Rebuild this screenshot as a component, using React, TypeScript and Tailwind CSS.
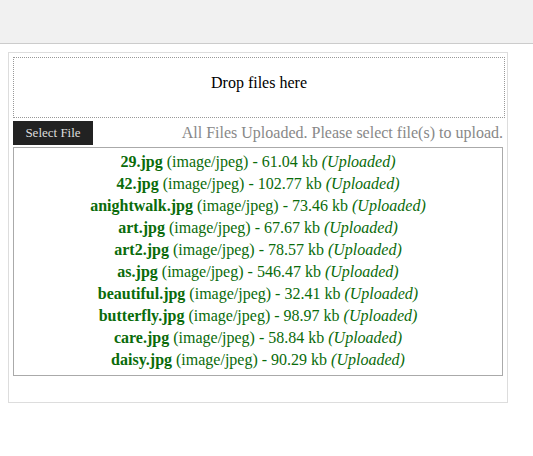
const files = [
  { name: "29.jpg", size: "61.04" },
  { name: "42.jpg", size: "102.77" },
  { name: "anightwalk.jpg", size: "73.46" },
  { name: "art.jpg", size: "67.67" },
  { name: "art2.jpg", size: "78.57" },
  { name: "as.jpg", size: "546.47" },
  { name: "beautiful.jpg", size: "32.41" },
  { name: "butterfly.jpg", size: "98.97" },
  { name: "care.jpg", size: "58.84" },
  { name: "daisy.jpg", size: "90.29" },
];

export default function App() {
  return (
    <div className="min-h-screen bg-white font-['Liberation_Serif','Times_New_Roman',serif] text-[16px]">
      <div className="h-[44px] bg-[#f1f1f1] border-b border-[#cccccc]" />

      <div className="ml-[8px] mt-[8px] w-[500px] border border-[#dddddd] pl-[4px] pt-[4px] pb-[26px]">
        <div className="w-[492px] h-[61px] border border-dotted border-[#999999] pt-[16px] text-center leading-[18px] text-black">
          Drop files here
        </div>

        <div className="mt-[3px] flex w-[490px] items-center justify-between">
          <button className="h-[24px] w-[80px] bg-[#222222] text-[13px] text-[#dddddd]">
            Select File
          </button>
          <span className="text-[#888888] leading-[18px]">
            All Files Uploaded. Please select file(s) to upload.
          </span>
        </div>

        <div className="mt-[2px] w-[490px] border border-[#aaaaaa] pt-[3px] pb-[4px] text-center text-[#0a6b0a]">
          {files.map((f) => (
            <div key={f.name} className="leading-[22px]">
              <b>{f.name}</b> (image/jpeg) - {f.size} kb <i>(Uploaded)</i>
            </div>
          ))}
        </div>
      </div>
    </div>
  );
}
